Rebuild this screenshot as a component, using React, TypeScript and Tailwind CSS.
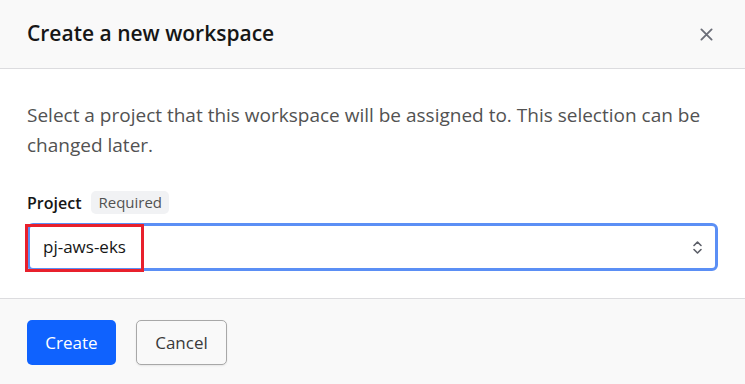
import React from 'react';

export default function App() {
  return (
    <div className="w-[745px] h-[384px] bg-white flex flex-col overflow-hidden font-['Open_Sans',sans-serif]">
      {/* Header */}
      <div className="h-[69px] shrink-0 bg-[#f9f9f9] border-b border-[#dcdcdf] flex items-center justify-between pl-[27px] pr-[32px]">
        <h2 className="text-[21px] font-semibold text-[#161616]">Create a new workspace</h2>
        <button className="text-[#6b6e78]">
          <svg width="13" height="13" viewBox="0 0 14 14" fill="none" stroke="currentColor" strokeWidth="2" strokeLinecap="round">
            <path d="M1.5 1.5l11 11M12.5 1.5l-11 11" />
          </svg>
        </button>
      </div>

      {/* Body */}
      <div className="flex-1 px-[27px] pt-[31px]">
        <p className="text-[19px] leading-[30px] text-[#525252] w-[691px]">
          Select a project that this workspace will be assigned to. This selection can be changed later.
        </p>
        <div className="mt-[31px] h-[23px] flex items-center gap-[10px]">
          <span className="text-[16px] font-semibold text-[#161616]">Project</span>
          <span className="h-[23px] px-[7px] flex items-center rounded-[5px] bg-[#f1f2f4] text-[15px] text-[#525252]">Required</span>
        </div>
        <div className="relative mt-[9px] w-[691px]">
          <div className="h-[48px] rounded-[6px] border-[3px] border-[#5b8ff5] bg-white flex items-center pl-[13px] pr-[12px]">
            <span className="flex-1 text-[17px] text-[#161616]">pj-aws-eks</span>
            <svg width="11" height="15" viewBox="0 0 11 15" fill="none" stroke="#5c5f68" strokeWidth="1.6" strokeLinecap="round" strokeLinejoin="round">
              <path d="M2 5.5l3.5-3.5L9 5.5M2 9.5l3.5 3.5L9 9.5" />
            </svg>
          </div>
          {/* annotation box */}
          <div className="absolute left-[-2px] top-[1px] w-[119px] h-[48px] border-[3px] border-[#e8202c]" />
        </div>
      </div>

      {/* Footer */}
      <div className="h-[86px] shrink-0 bg-[#f9f9f9] border-t border-[#dcdcdf] flex items-start gap-[20px] pl-[27px] pt-[21px]">
        <button className="w-[89px] h-[45px] rounded-[5px] bg-[#0f62fe] text-white text-[17px]">Create</button>
        <button className="w-[91px] h-[45px] rounded-[5px] border border-[#a8a8a8] bg-[#f9f9f9] text-[#393939] text-[17px] shadow-[0_1px_2px_rgba(0,0,0,0.08)]">Cancel</button>
      </div>
    </div>
  );
}
